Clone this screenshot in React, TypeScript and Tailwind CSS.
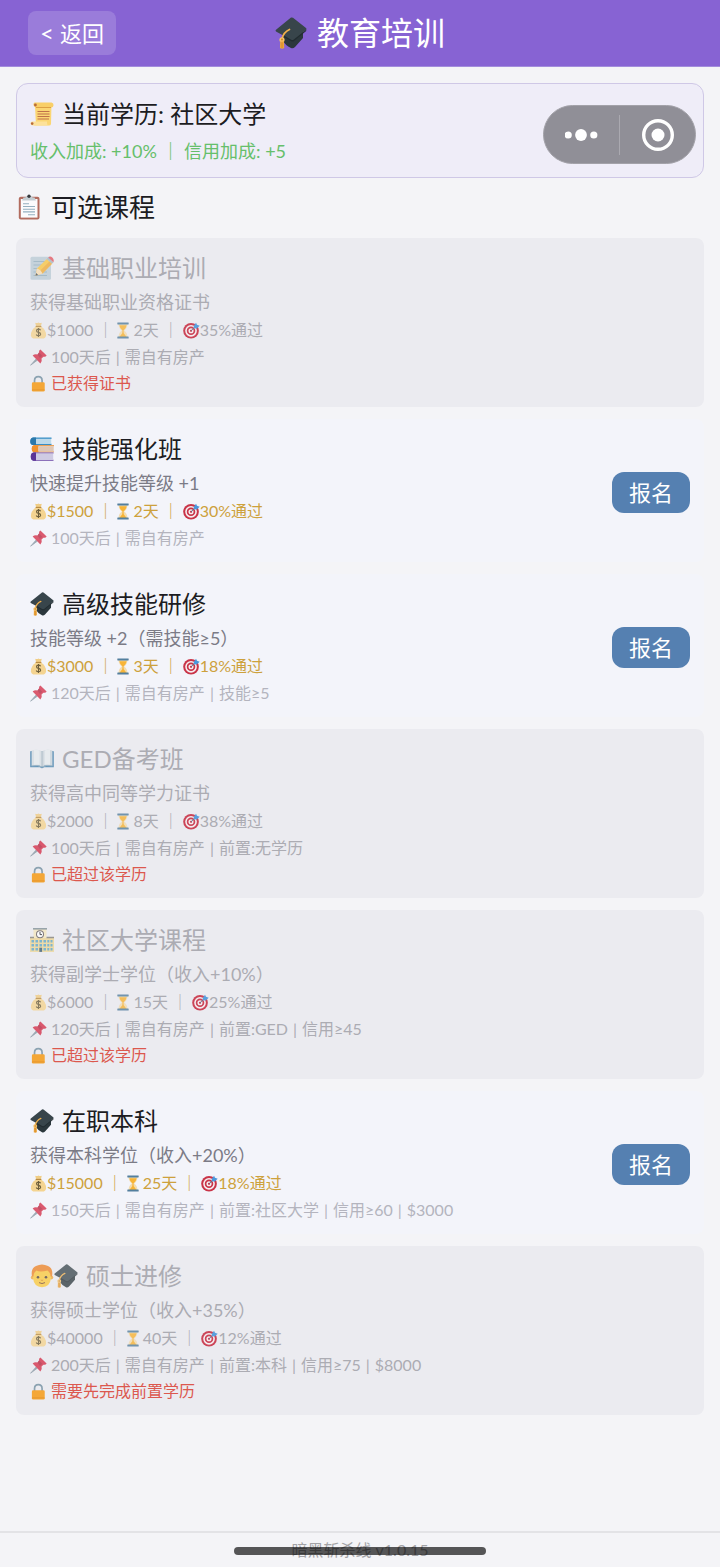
import { Fragment } from "react";
import type { ReactNode } from "react";
import clsx from "clsx";

type IconProps = { className?: string };

function GradCap({ className }: IconProps) {
  return (
    <svg viewBox="0 0 32 32" className={className} aria-hidden="true">
      <path d="M8 14 L8 24 Q11 29 16 31 Q18 32 20 30 L28 21 L28 12 Z" fill="#2b373c" />
      <path d="M16 .5 Q17 .2 18 .8 L31 11 Q32 12 31.200 12.800 L19 22.500 Q17.500 23.500 16 22.700 L1 14.500 Q0 13.500 1 12.700 Z" fill="#38454b" />
      <path d="M19 22.500 L31.200 12.800 L31.200 14 L19 24 Q17.500 25 16 24 L8 19.500 L8 18 L16 22.700 Q17.500 23.500 19 22.500 Z" fill="#222c30" />
      <path d="M14.500 12.500 Q8.500 15 7 22" fill="none" stroke="#f2b04a" strokeWidth="1.700" strokeLinecap="round" />
      <circle cx="7" cy="22.800" r="2.600" fill="#f6c067" />
      <path d="M5.200 24.500 L9 24.500 L9.200 31 Q7 32.300 5 31 Z" fill="#eda63c" />
      <path d="M7 25.500 L7 31" stroke="#cf8227" strokeWidth=".8" />
      <circle cx="7" cy="22.600" r="1" fill="#c6862d" />
    </svg>
  );
}

function Scroll({ className }: IconProps) {
  return (
    <svg viewBox="0 0 24 24" className={className} aria-hidden="true">
      <path d="M5 4 L21.500 2.500 L21 22 Q20.800 23.600 19 23.600 L4 23.600 Q5.800 22.500 5.800 20 Z" fill="#fbd673" />
      <path d="M4.500 .6 L21.500 .6 Q23.800 1 23.500 3.600 Q23.200 5.600 21.300 5.600 L6 5.600 Q3.500 5 3.400 2.800 Q3.500 1 4.500 .6 Z" fill="#f9cf68" />
      <path d="M6 5.500 L21 5.500" stroke="#d99a3f" strokeWidth=".9" />
      <circle cx="5.400" cy="3" r="1.400" fill="#b76a3c" />
      <path d="M.5 21.300 Q.5 19.400 2.300 19.400 L17 19.400 L17 21 Q17 23.600 19 23.600 L3 23.600 Q.5 23.500 .5 21.300 Z" fill="#fde19a" />
      <circle cx="2.200" cy="21.600" r="1.300" fill="#b76a3c" />
      <path d="M7.500 9.500 H19.500 M7.500 12 H19.500 M7.500 14.500 H19.500 M7.500 17 H19" stroke="#c0714b" strokeWidth="1.200" />
    </svg>
  );
}

function Clipboard({ className }: IconProps) {
  return (
    <svg viewBox="0 0 24 26" className={className} aria-hidden="true">
      <rect x="1.800" y="2.800" width="20.700" height="22.700" rx="2" fill="#b26c5f" />
      <rect x="3.800" y="5" width="16.700" height="18.600" fill="#fbfbfc" />
      <path d="M5 6.500 L6.500 3.500 Q9.500 3.500 9.500 2 L14.500 2 Q14.500 3.500 17.500 3.500 L19 6.500 Z" fill="#c4cdd2" />
      <circle cx="12" cy="2.200" r="1.700" fill="#35393d" />
      <path d="M6 9.800 H12 M6 12.500 H18 M6 15.200 H18 M6 17.900 H18 M11 20.800 H18" stroke="#94b0bf" strokeWidth="1.100" />
    </svg>
  );
}

function Memo({ className }: IconProps) {
  return (
    <svg viewBox="0 0 24 24" className={className} aria-hidden="true">
      <rect x=".5" y=".8" width="20.500" height="22.900" rx="1.500" fill="#b9cad5" />
      <path d="M3.500 5.500 H15 M3.500 9 H13 M3.500 12.500 H17 M3.500 16 H17 M3.500 19.500 H17" stroke="#8fabbb" strokeWidth="1" />
      <path d="M5.500 19.800 L7 12.500 L16.800 3 L22 7.800 L12.500 17.500 Z" fill="#f9c43d" />
      <path d="M9.700 15 L19.400 5.400 L22 7.800 L12.500 17.500 Z" fill="#f0a930" />
      <path d="M16.800 3 L18.500 1.300 L23.500 6.200 L22 7.800 Z" fill="#a3b3bc" />
      <path d="M18.300 1.500 Q20 -.2 22.300 1.400 Q24.500 3.700 23.400 6.300 Z" fill="#e4525c" />
      <path d="M5.500 19.800 L7 12.500 Q10.500 13.500 12.500 17.500 Z" fill="#f8dcb0" />
      <path d="M5.500 19.800 L6.100 17 L8.200 18.900 Z" fill="#41474b" />
    </svg>
  );
}

function Books({ className }: IconProps) {
  return (
    <svg viewBox="0 0 24 24" className={className} aria-hidden="true">
      <path d="M3 .5 H21.500 V2 H3.500 V6.800 H21.500 V8 H3 Q.3 7.800 .3 4.400 Q.3 1 3 .5 Z" fill="#3a8fc6" />
      <rect x="5" y="1.800" width="16.200" height="5.200" fill="#bcd9ea" />
      <path d="M3 .5 H6 V8 H3 Q.3 7.800 .3 4.400 Q.3 1 3 .5 Z" fill="#2b78ab" />
      <path d="M4.500 8.200 H24 V9.200 H5 V14.400 H24 V15.200 H4.500 Q1.800 15 1.800 11.700 Q1.800 8.500 4.500 8.200 Z" fill="#ea8523" />
      <path d="M4.500 8.200 H8.500 V15.200 H4.500 Q1.800 15 1.800 11.700 Q1.800 8.500 4.500 8.200 Z" fill="#f0912d" />
      <rect x="8.500" y="9.200" width="15.200" height="5.200" fill="#dec7b6" />
      <path d="M3.500 15.400 H23.500 V16.600 H4 V22.700 H23.500 V23.800 H3.500 Q.8 23.500 .8 19.600 Q.8 15.700 3.500 15.400 Z" fill="#6b45a5" />
      <path d="M3.500 15.400 H6 V23.800 H3.500 Q.8 23.500 .8 19.600 Q.8 15.700 3.500 15.400 Z" fill="#5c3596" />
      <rect x="6" y="16.600" width="17.200" height="6.100" fill="#cfcbe3" />
    </svg>
  );
}

function OpenBook({ className }: IconProps) {
  return (
    <svg viewBox="0 0 24 24" className={className} aria-hidden="true">
      <path d="M.2 4.800 Q.2 4 1 4 H23 Q23.800 4 23.800 4.800 V20.300 H14 Q12 22.200 10 20.300 H.2 Z" fill="#3a7ba8" />
      <path d="M1.600 3.500 Q7.500 1.600 12 4.200 V19.600 Q8 17.400 1.600 18.700 Z" fill="#d5dde2" />
      <path d="M22.400 3.500 Q16.500 1.600 12 4.200 V19.600 Q16 17.400 22.400 18.700 Z" fill="#c9d3da" />
      <path d="M4 3 Q7 2.600 9.500 3.400 V17.800 Q7 17.300 4 17.800 Z M20 3 Q17 2.600 14.500 3.400 V17.800 Q17 17.300 20 17.800 Z" fill="#e6ebee" />
      <path d="M12 4.200 V19.600" stroke="#94a9b6" strokeWidth=".9" />
      <path d="M1.500 18.900 Q8 17.600 12 20 Q16 17.600 22.500 18.900" fill="none" stroke="#8fa9b9" strokeWidth=".8" />
    </svg>
  );
}

function School({ className }: IconProps) {
  return (
    <svg viewBox="0 0 24 24" className={className} aria-hidden="true">
      <rect x="3.500" y=".8" width="13" height="22.700" fill="#f3e6bb" />
      <rect x="3" y="0" width="14" height="1.600" fill="#7d8d94" />
      <rect x="0" y="10" width="24" height="13.900" fill="#eed590" />
      <path d="M0 9.500 H4 M16.500 9.500 H24" stroke="#7e7b76" strokeWidth="1.400" />
      <circle cx="10" cy="6.300" r="4" fill="#5c5558" />
      <circle cx="10" cy="6.300" r="3" fill="#fff" />
      <path d="M10 4 V6.600 H12" fill="none" stroke="#26292b" strokeWidth="1" />
      <path d="M1.500 12 H4 V14.500 H1.500 Z M5.500 12 H8 V14.500 H5.500 Z M9.500 12 H12 V14.500 H9.500 Z M13.500 12 H16 V14.500 H13.500 Z M17.300 12 H19.300 V14.500 H17.300 Z M20.500 12 H22.500 V14.500 H20.500 Z M1.500 16 H4 V18.500 H1.500 Z M5.500 16 H8 V18.500 H5.500 Z M9.500 16 H12 V18.500 H9.500 Z M13.500 16 H16 V18.500 H13.500 Z M17.300 16 H19.300 V18.500 H17.300 Z M20.500 16 H22.500 V18.500 H20.500 Z M1.500 20 H4 V22.500 H1.500 Z M5.500 20 H8 V22.500 H5.500 Z M13.500 20 H16 V22.500 H13.500 Z M17.300 20 H19.300 V22.500 H17.300 Z M20.500 20 H22.500 V22.500 H20.500 Z" fill="#5aa3c4" />
      <rect x="9.300" y="19.700" width="2.800" height="4.200" fill="#34566d" />
    </svg>
  );
}

function Student({ className }: IconProps) {
  return (
    <svg viewBox="0 0 24 24" className={className} aria-hidden="true">
      <circle cx="2.800" cy="13.500" r="2" fill="#f0a93b" />
      <circle cx="21.200" cy="13.500" r="2" fill="#f0a93b" />
      <path d="M3 11 Q3 3 12 3 Q21 3 21 11 V14 Q20 23.200 12 23.200 Q4 23.200 3 14 Z" fill="#fcc938" />
      <path d="M2 12.500 Q.5 4.500 6 2 Q12 -1 18 2 Q23.500 4.500 22 12.500 L20.500 12.500 Q20.500 8.500 17.500 6.500 Q10 8.500 6.500 6.500 Q3.500 8.500 3.500 12.500 Z" fill="#ee8222" />
      <circle cx="8" cy="13.200" r="1.300" fill="#4b3c36" />
      <circle cx="16" cy="13.200" r="1.300" fill="#4b3c36" />
      <path d="M10.800 16 Q12 17 13.200 16" fill="none" stroke="#d98c27" strokeWidth="1" />
      <path d="M9 18.600 Q12 20.500 15 18.600" fill="none" stroke="#7b4a2b" strokeWidth="1" />
    </svg>
  );
}

function MoneyBag({ className }: IconProps) {
  return (
    <svg viewBox="0 0 18 18" className={className} aria-hidden="true">
      <path d="M5.500 .8 Q7.300 1.600 9 .6 Q10.700 1.600 12.500 .8 L11.500 4.500 H6.500 Z" fill="#f0cd85" />
      <path d="M6.500 4.500 H11.500 Q17.300 8.500 17 14 Q16.700 17.600 13 17.600 H5 Q1.300 17.600 1 14 Q.7 8.500 6.500 4.500 Z" fill="#f4d491" />
      <path d="M6 4.700 H12" stroke="#b98b43" strokeWidth="1.200" />
      <path d="M11.300 8.700 Q10.600 7.600 9 7.600 Q6.900 7.700 6.900 9.300 Q6.900 10.600 9 11 Q11.300 11.400 11.300 12.900 Q11.200 14.500 9 14.500 Q7.200 14.500 6.600 13.200 M9 6.300 V15.800" fill="none" stroke="#6d5e3b" strokeWidth="1.200" />
    </svg>
  );
}

function Hourglass({ className }: IconProps) {
  return (
    <svg viewBox="0 0 12 18" className={className} aria-hidden="true">
      <path d="M1.300 2 H10.700 Q10.700 6.500 7.200 9 Q10.700 11.500 10.700 16 H1.300 Q1.300 11.500 4.800 9 Q1.300 6.500 1.300 2 Z" fill="#f3dcae" />
      <path d="M2.200 3.500 H9.800 Q9.500 6.500 6.500 9 L6.800 12 L9.800 15.800 H2.200 L5.200 12 L5.500 9 Q2.500 6.500 2.200 3.500 Z" fill="#f7b437" />
      <rect x="0" y=".4" width="12" height="2.200" rx=".4" fill="#537f9e" />
      <rect x="0" y="15.400" width="12" height="2.200" rx=".4" fill="#537f9e" />
    </svg>
  );
}

function Target({ className }: IconProps) {
  return (
    <svg viewBox="0 0 18 18" className={className} aria-hidden="true">
      <circle cx="8.500" cy="9.300" r="8.300" fill="#c93448" />
      <circle cx="8.500" cy="9.300" r="6.200" fill="#f6eef1" />
      <circle cx="8.500" cy="9.300" r="4.500" fill="#c93448" />
      <circle cx="8.500" cy="9.300" r="2.700" fill="#f6eef1" />
      <circle cx="8.500" cy="9.300" r="1.200" fill="#c93448" />
      <path d="M8.500 9.300 L13.500 4.500" stroke="#54728c" strokeWidth="1" />
      <path d="M11.300 4.300 L13.800 .8 L14.800 3 L17.700 4 L14.500 7 L11.600 6.600 Z" fill="#4a97dc" />
    </svg>
  );
}

function Pushpin({ className }: IconProps) {
  return (
    <svg viewBox="0 0 18 18" className={className} aria-hidden="true">
      <path d="M.6 17.200 L6.500 10.500 L7.800 11.800 Z" fill="#8798a4" stroke="#8798a4" strokeWidth=".8" strokeLinejoin="round" />
      <path d="M2.800 7 Q5 4.800 8 5.800 L9.600 3.800 Q9 1.500 11 .4 L17.600 6.800 Q16.500 8.800 14.200 8.100 L12.200 10 Q13.200 13.200 11 15.400 Z" fill="#d5344d" />
      <path d="M8 5.800 L9.600 3.800 L13 7.200 L10.500 9.600 Z" fill="#b72a43" />
    </svg>
  );
}

function Padlock({ className }: IconProps) {
  return (
    <svg viewBox="0 0 18 18" className={className} aria-hidden="true">
      <path d="M4.800 9 V5.800 Q4.900 1.800 8.800 1.800 Q12.700 1.800 12.800 5.800 V9" fill="none" stroke="#8ba2b1" strokeWidth="1.800" />
      <rect x="2" y="7.800" width="13.600" height="9.800" rx="1.400" fill="#f4a737" />
      <path d="M2.200 15.800 H15.400" stroke="#e3912a" strokeWidth=".8" />
    </svg>
  );
}

type Course = {
  name: string;
  icon: ReactNode;
  desc: string;
  cost: string;
  days: string;
  rate: string;
  needs: string[];
  locked?: string;
};

const titleIcon = "size-6";

const courses: Course[] = [
  {
    name: "基础职业培训",
    icon: <Memo className={titleIcon} />,
    desc: "获得基础职业资格证书",
    cost: "$1000",
    days: "2天",
    rate: "35%通过",
    needs: ["100天后", "需自有房产"],
    locked: "已获得证书",
  },
  {
    name: "技能强化班",
    icon: <Books className={titleIcon} />,
    desc: "快速提升技能等级 +1",
    cost: "$1500",
    days: "2天",
    rate: "30%通过",
    needs: ["100天后", "需自有房产"],
  },
  {
    name: "高级技能研修",
    icon: <GradCap className={titleIcon} />,
    desc: "技能等级 +2（需技能≥5）",
    cost: "$3000",
    days: "3天",
    rate: "18%通过",
    needs: ["120天后", "需自有房产", "技能≥5"],
  },
  {
    name: "GED备考班",
    icon: <OpenBook className={titleIcon} />,
    desc: "获得高中同等学力证书",
    cost: "$2000",
    days: "8天",
    rate: "38%通过",
    needs: ["100天后", "需自有房产", "前置:无学历"],
    locked: "已超过该学历",
  },
  {
    name: "社区大学课程",
    icon: <School className={titleIcon} />,
    desc: "获得副学士学位（收入+10%）",
    cost: "$6000",
    days: "15天",
    rate: "25%通过",
    needs: ["120天后", "需自有房产", "前置:GED", "信用≥45"],
    locked: "已超过该学历",
  },
  {
    name: "在职本科",
    icon: <GradCap className={titleIcon} />,
    desc: "获得本科学位（收入+20%）",
    cost: "$15000",
    days: "25天",
    rate: "18%通过",
    needs: ["150天后", "需自有房产", "前置:社区大学", "信用≥60", "$3000"],
  },
  {
    name: "硕士进修",
    icon: (
      <span className="flex">
        <Student className={titleIcon} />
        <GradCap className={titleIcon} />
      </span>
    ),
    desc: "获得硕士学位（收入+35%）",
    cost: "$40000",
    days: "40天",
    rate: "12%通过",
    needs: ["200天后", "需自有房产", "前置:本科", "信用≥75", "$8000"],
    locked: "需要先完成前置学历",
  },
];

function CourseCard({ course }: { course: Course }) {
  const locked = Boolean(course.locked);
  return (
    <li
      className={clsx(
        "flex items-center justify-between rounded-lg px-[14px] pt-[14px] pb-[11px]",
        locked ? "bg-[#ebebf0] text-[#acacb3]" : "bg-[#f3f4fa]"
      )}
    >
      <div>
        <h3 className="flex items-center gap-2 text-2xl leading-8">
          <span className={clsx(locked && "opacity-75")}>{course.icon}</span>
          {course.name}
        </h3>
        <p className={clsx("mt-1 text-lg leading-7", !locked && "text-[#7b7b86]")}>{course.desc}</p>
        <p className={clsx("flex items-center text-base leading-7", !locked && "text-[#cda13c]")}>
          <MoneyBag className={clsx("size-[17px]", locked && "opacity-80")} />
          {course.cost}
          <span className="mx-1">｜</span>
          <Hourglass className={clsx("mr-1 h-[17px] w-3", locked && "opacity-80")} />
          {course.days}
          <span className="mx-1">｜</span>
          <Target className={clsx("size-[17px]", locked && "opacity-90")} />
          {course.rate}
        </p>
        <p className={clsx("flex items-center text-base leading-[26px]", !locked && "text-[#b4b4be]")}>
          <Pushpin className="mr-1 size-[17px] opacity-80" />
          {course.needs.map((need, i) => (
            <Fragment key={need}>
              {i > 0 && <span className="mx-[5px]">|</span>}
              {need}
            </Fragment>
          ))}
        </p>
        {locked && (
          <p className="flex items-center gap-1 text-base leading-[26px] text-[#dc584e]">
            <Padlock className="size-[17px]" />
            {course.locked}
          </p>
        )}
      </div>
      {!locked && (
        <button type="button" className="shrink-0 rounded-xl bg-[#5580b1] px-[17px] py-1 text-[22px] leading-[33px] text-white">
          报名
        </button>
      )}
    </li>
  );
}

export default function App() {
  return (
    <div className="relative flex min-h-screen flex-col bg-[#f4f4f7] font-['Lato','Noto_Sans_CJK_SC',sans-serif] text-[#1c1c22]">
      <header className="grid grid-cols-[1fr_auto_1fr] items-center border-b border-[#a28cdc] bg-[#8763d3] px-7 py-[11px] text-white">
        <button type="button" className="flex h-11 items-center gap-1.5 justify-self-start rounded-lg bg-white/16 px-3 text-[22px]">
          <span className="text-2xl">&lt;</span>
          <span>返回</span>
        </button>
        <h1 className="flex items-center gap-[10px] text-[32px] leading-10">
          <GradCap className="size-8" />
          教育培训
        </h1>
      </header>

      <main className="flex-1 px-4 pt-4">
        <section className="rounded-xl border border-[#cfc8e6] bg-[#efedf8] px-[13px] pt-[14px] pb-[13px]">
          <h2 className="flex items-center gap-2 text-2xl leading-8">
            <Scroll className="size-6" />
            当前学历: 社区大学
          </h2>
          <p className="mt-2 text-lg leading-[26px] text-[#66bf6b]">收入加成: +10% ｜ 信用加成: +5</p>
        </section>

        <h2 className="mt-[11px] mb-[13px] flex items-center gap-[9px] text-[26px] leading-9">
          <Clipboard className="h-[26px] w-[26px]" />
          可选课程
        </h2>

        <ul className="flex flex-col gap-3">
          {courses.map((course) => (
            <CourseCard key={course.name} course={course} />
          ))}
        </ul>
      </main>

      <footer className="relative border-t-2 border-[#e3e3e6] py-1 text-center text-base leading-[26px] text-[#a3a3a6]">
        暗黑斩杀线 v1.0.15
        {/* system home indicator */}
        <div className="absolute bottom-3 left-1/2 h-2 w-[35%] -translate-x-1/2 rounded-full bg-black/65" />
      </footer>

      {/* mini program capsule menu */}
      <div className="absolute top-[105px] right-6 flex h-[59px] w-[153px] items-center rounded-full border border-[#a3a2a9] bg-[#908f97]">
        <button type="button" aria-label="更多" className="flex flex-1 justify-center">
          <svg viewBox="0 0 34 14" className="h-[14px] w-[34px]" fill="white">
            <circle cx="3.200" cy="7" r="3.600" />
            <circle cx="16" cy="7" r="5.900" />
            <circle cx="28.800" cy="7" r="3.600" />
          </svg>
        </button>
        <span className="h-10 w-px bg-[#aaa9b0]" />
        <button type="button" aria-label="关闭" className="flex flex-1 justify-center">
          <svg viewBox="0 0 34 34" className="size-[34px]">
            <circle cx="17" cy="17" r="14.300" fill="none" stroke="white" strokeWidth="3.400" />
            <circle cx="17" cy="17" r="6.500" fill="white" />
          </svg>
        </button>
      </div>
    </div>
  );
}
